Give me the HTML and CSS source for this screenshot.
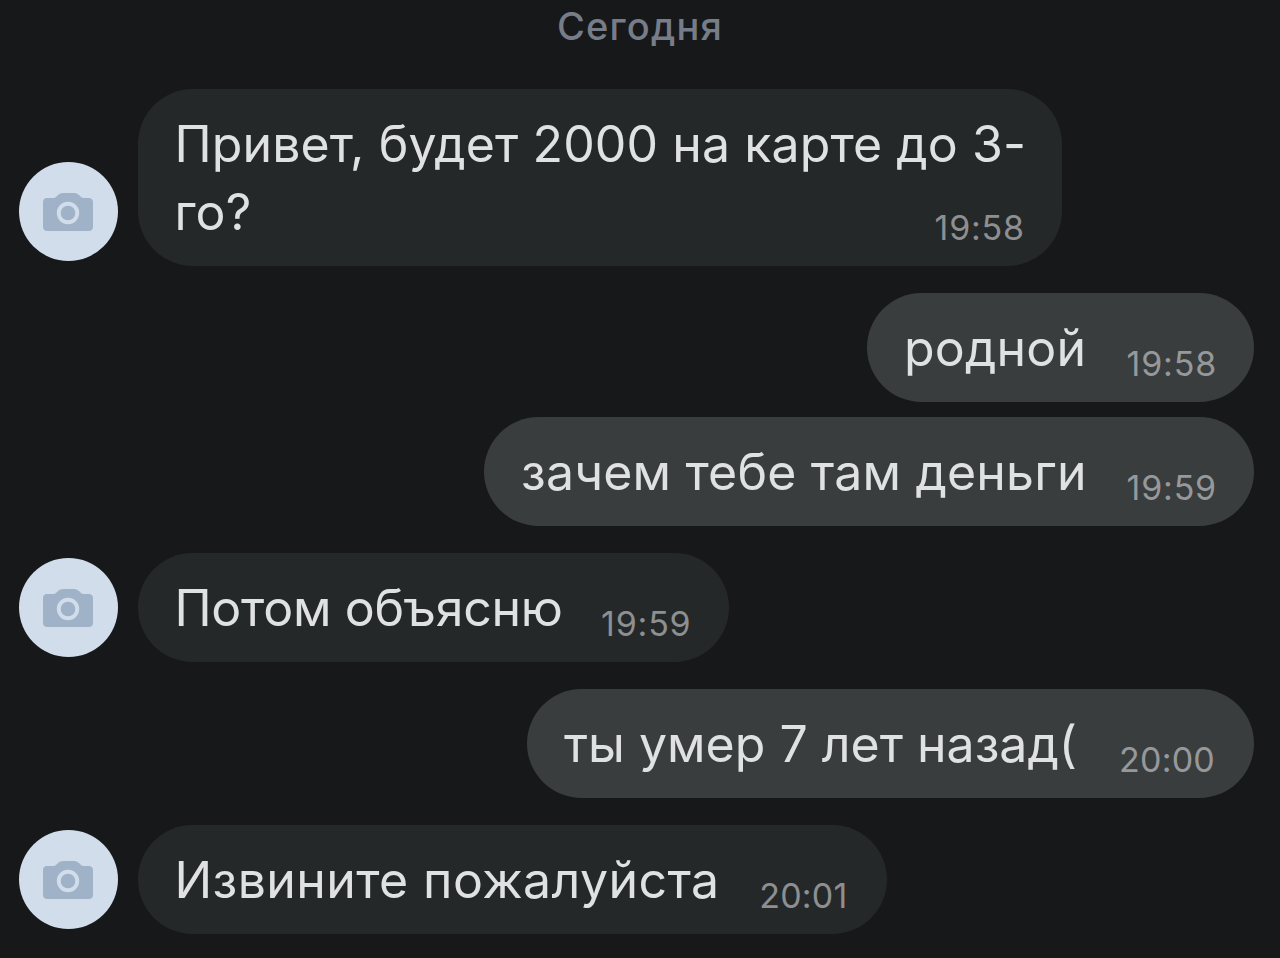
FILE: index.html
```html
<!DOCTYPE html>
<html lang="ru">
<head>
    <meta charset="UTF-8">
    <meta name="viewport" content="width=device-width, initial-scale=1.0">
    <title>Сообщения</title>
    <link rel="stylesheet" href="styles.css">
</head>
<body>
    <svg class="sprite">
        <symbol id="camera" viewBox="0 0 50 38">
            <path fill-rule="evenodd" d="M4 5h6q2 0 3.500-1.500L15 2Q17 0 20 0h11q3 0 5 2l1.500 1.500Q39 5 41 5h4.500Q50 5 50 9.500v24q0 4.500-4.500 4.500h-41Q0 38 0 33.500V9.500Q0 5 4 5zM25 8.800a11.200 11.200 0 1 0 0 22.400a11.200 11.200 0 1 0 0-22.400zM25 12.700a7.300 7.300 0 1 1 0 14.600a7.300 7.300 0 1 1 0-14.600z"/>
        </symbol>
    </svg>
    <div class="chat">
        <div class="date">Сегодня</div>

        <div class="row incoming">
            <div class="avatar"><svg class="camera"><use href="#camera"/></svg></div>
            <div class="bubble question">
                <div class="text">Привет, будет 2000 на карте до 3-<br>го?</div>
                <span class="time">19:58</span>
            </div>
        </div>

        <div class="row outgoing grouped">
            <div class="bubble dear">
                <span class="text">родной</span>
                <span class="time">19:58</span>
            </div>
        </div>

        <div class="row outgoing">
            <div class="bubble money">
                <span class="text">зачем тебе там деньги</span>
                <span class="time">19:59</span>
            </div>
        </div>

        <div class="row incoming">
            <div class="avatar"><svg class="camera"><use href="#camera"/></svg></div>
            <div class="bubble later">
                <span class="text">Потом объясню</span>
                <span class="time">19:59</span>
            </div>
        </div>

        <div class="row outgoing">
            <div class="bubble years">
                <span class="text">ты умер 7 лет назад(</span>
                <span class="time wide">20:00</span>
            </div>
        </div>

        <div class="row incoming">
            <div class="avatar"><svg class="camera"><use href="#camera"/></svg></div>
            <div class="bubble sorry">
                <span class="text">Извините пожалуйста</span>
                <span class="time wide">20:01</span>
            </div>
        </div>
    </div>
</body>
</html>
```
FILE: styles.css
```css
body {
    margin: 0;
    background: #17181a;
    color: #dfe1e2;
    font-family: Inter, "Noto Sans", sans-serif;
    overflow: hidden;
}
.sprite {
    display: none;
}
.chat {
    display: flex;
    flex-direction: column;
}
.date {
    height: 89px;
    line-height: 53px;
    text-align: center;
    font-size: 38px;
    font-weight: 450;
    letter-spacing: 1.2px;
    color: #777d88;
}
.row {
    display: flex;
    align-items: flex-end;
    margin-bottom: 27px;
}
.incoming {
    padding-left: 18.5px;
}
.outgoing {
    justify-content: flex-end;
    padding-right: 26px;
}
.grouped {
    margin-bottom: 15px;
}
.avatar {
    display: flex;
    align-items: center;
    justify-content: center;
    width: 99px;
    height: 99px;
    margin: 0 20px 5px 0;
    border-radius: 50%;
    background: #d1ddea;
}
.camera {
    width: 50px;
    height: 38px;
    fill: #9fb2c8;
}
.bubble {
    display: flex;
    align-items: flex-end;
    justify-content: space-between;
    box-sizing: border-box;
    height: 109px;
    padding: 0 37px;
    border-radius: 55px;
    background: #252829;
    white-space: nowrap;
}
.outgoing .bubble {
    background: #3a3d3e;
}
.text {
    font-size: 50px;
    line-height: 68px;
    padding-bottom: 20px;
}
.time {
    padding-bottom: 18px;
    font-size: 34px;
    line-height: 40px;
    letter-spacing: 0.8px;
    color: #8d8f91;
}
.outgoing .time {
    color: #96999b;
}
.time.wide {
    margin-right: 2px;
    letter-spacing: 0.2px;
}

/* bubble sizes */
.question {
    width: 924px;
    height: 177px;
    letter-spacing: 0.1px;
}
.question .time {
    margin-left: -89px;
}
.question .text {
    width: 849px;
}
.dear {
    width: 387px;
    letter-spacing: 0.2px;
}
.money {
    width: 770px;
    letter-spacing: 0.18px;
}
.later {
    width: 591px;
    letter-spacing: -0.3px;
}
.years {
    width: 727px;
}
.sorry {
    width: 749px;
    letter-spacing: 0.4px;
}
```
